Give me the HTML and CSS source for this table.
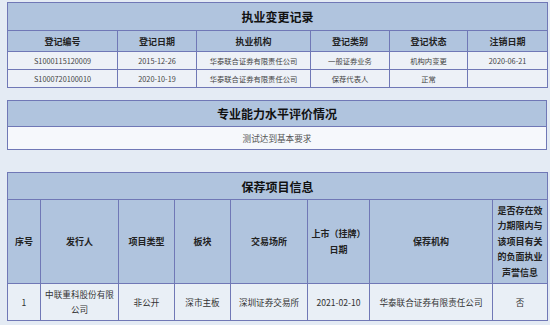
FILE: index.html
```html
<!DOCTYPE html>
<html lang="zh-CN">
<head>
<meta charset="utf-8">
<link rel="stylesheet" href="styles.css">
</head>
<body>
<div class="page">
  <table class="tbl t1">
    <colgroup>
      <col style="width:110px"><col style="width:79px"><col style="width:114px"><col style="width:79px"><col style="width:78px"><col style="width:80px">
    </colgroup>
    <tr class="title"><td colspan="6">执业变更记录</td></tr>
    <tr class="head"><th>登记编号</th><th>登记日期</th><th>执业机构</th><th>登记类别</th><th>登记状态</th><th>注销日期</th></tr>
    <tr class="row"><td>S1000115120009</td><td>2015-12-26</td><td>华泰联合证券有限责任公司</td><td>一般证券业务</td><td>机构内变更</td><td>2020-06-21</td></tr>
    <tr class="row"><td>S1000720100010</td><td>2020-10-19</td><td>华泰联合证券有限责任公司</td><td>保荐代表人</td><td>正常</td><td></td></tr>
  </table>

  <table class="tbl t2">
    <tr class="title"><td>专业能力水平评价情况</td></tr>
    <tr class="content"><td>测试达到基本要求</td></tr>
  </table>

  <table class="tbl t3">
    <colgroup>
      <col style="width:33px"><col style="width:78px"><col style="width:56px"><col style="width:56px"><col style="width:77px"><col style="width:62px"><col style="width:123px"><col style="width:55px">
    </colgroup>
    <tr class="title"><td colspan="8">保荐项目信息</td></tr>
    <tr class="head3"><th>序号</th><th>发行人</th><th>项目类型</th><th>板块</th><th>交易场所</th><th>上市（挂牌）<br>日期</th><th>保荐机构</th><th>是否存在效<br>力期限内与<br>该项目有关<br>的负面执业<br>声誉信息</th></tr>
    <tr class="row3"><td>1</td><td>中联重科股份有限<br>公司</td><td>非公开</td><td>深市主板</td><td>深圳证券交易所</td><td>2021-02-10</td><td>华泰联合证券有限责任公司</td><td>否</td></tr>
  </table>
</div>
</body>
</html>
```

FILE: styles.css
```css
html, body {
  margin: 0;
  padding: 0;
  background: #e4ebf4;
}
.page {
  padding: 2px 0 0 7px;
  font-family: "Noto Sans CJK SC", "Noto Sans", sans-serif;
}
.tbl {
  width: 540px;
  border-collapse: collapse;
  table-layout: fixed;
  border: 1px solid #7078b6;
}
.tbl td, .tbl th {
  border: 1px solid #7078b6;
  padding: 0 4px;
  text-align: center;
  vertical-align: middle;
}
.title td {
  background: #b0c4de;
  font-weight: bold;
  font-size: 12px;
  color: #111;
  height: 27px;
  padding: 0;
}
.head th {
  background: #b0c4de;
  font-size: 9px;
  font-weight: bold;
  color: #222;
  height: 20px;
  padding: 0;
}
.row td {
  background: #edf1f7;
  font-size: 7.3px;
  color: #444;
  height: 17px;
  padding: 0;
}
.t2 {
  margin-top: 12px;
}
.t2 .title td {
  height: 25px;
}
.content td {
  background: #f6f8fc;
  font-size: 8.6px;
  color: #555;
  height: 22px;
}
.t3 {
  margin-top: 22px;
}
.t3 .title td {
  height: 26px;
}
.head3 th {
  background: #b0c4de;
  font-size: 9px;
  font-weight: bold;
  color: #222;
  line-height: 15.5px;
  height: 83px;
  padding: 0 2px;
}
.row3 td {
  background: #e9eff6;
  font-size: 8.6px;
  color: #333;
  line-height: 15px;
  height: 36px;
  padding: 0 2px;
}
```
